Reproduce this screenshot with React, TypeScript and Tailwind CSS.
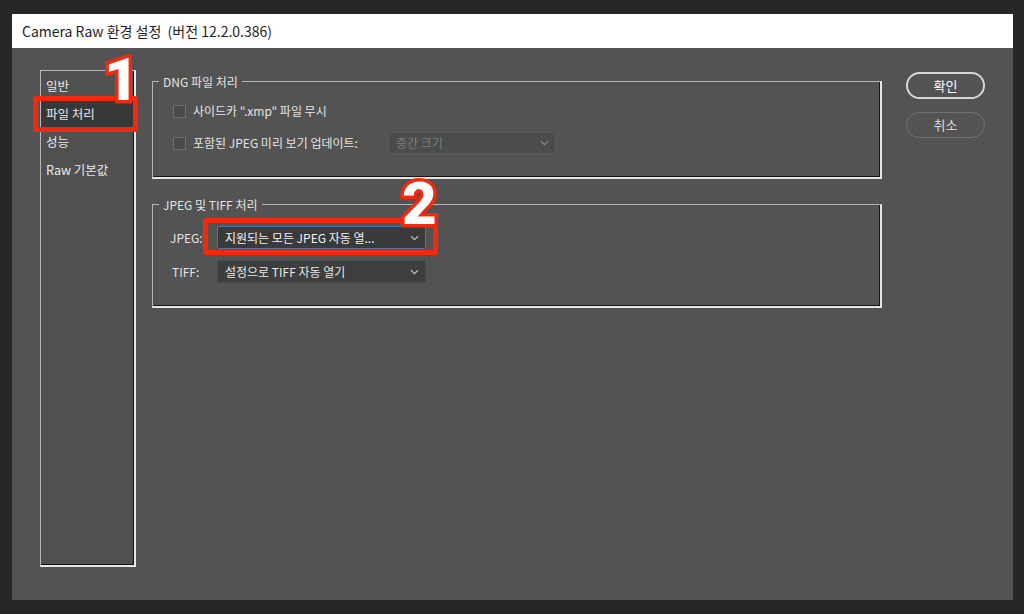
import React from "react";

const font = "font-['Noto_Sans_CJK_KR','Noto_Sans',sans-serif]";

function Chevron({ className }: { className?: string }) {
  return (
    <svg width="9" height="6" viewBox="0 0 9 6" className={className}>
      <path d="M1 1.2 4.5 4.6 8 1.2" fill="none" stroke="currentColor" strokeWidth="1.2" />
    </svg>
  );
}

function Select({ text, variant }: { text: string; variant: "focus" | "normal" | "disabled" }) {
  const styles = {
    focus: "bg-[#3a3a3a] border-[#4b78aa] text-[#f2f2f2]",
    normal: "bg-[#3e3e3e] border-[#494949] text-[#e8e8e8]",
    disabled: "bg-[#4c4c4c] border-[#575757] text-[#7d7d7d]",
  }[variant];
  return (
    <div className={`flex h-full items-center justify-between rounded-[2px] border pl-[7px] pr-[6px] ${styles}`}>
      <span className="text-[12px] leading-none">{text}</span>
      <Chevron className={variant === "disabled" ? "text-[#8a8a8a]" : "text-[#bdbdbd]"} />
    </div>
  );
}

function Checkbox() {
  return <div className="size-[13px] shrink-0 border border-[#6d6d6d] bg-[#4a4a4a]" />;
}

function Group({ title, children, className }: { title: string; children: React.ReactNode; className?: string }) {
  return (
    <fieldset
      className={`border border-t-[#b4b4b4] border-l-[#b4b4b4] border-r-2 border-b-2 border-r-[#e6e6e6] border-b-[#e6e6e6] shadow-[inset_-1px_-1px_0_#151515] ${className ?? ""}`}
    >
      <legend className="ml-[6px] px-[4px] text-[12px] leading-[17px] text-[#e4e4e4]">{title}</legend>
      {children}
    </fieldset>
  );
}

const sideItems = ["일반", "파일 처리", "성능", "Raw 기본값"];

export default function App() {
  return (
    <div className={`relative h-[614px] w-[1024px] overflow-hidden bg-[#272727] pl-[12px] pt-[14px] ${font}`}>
      <div className="flex h-[586px] w-[1001px] flex-col">
        {/* title bar */}
        <div className="flex h-[34px] items-center bg-white pl-[10px]">
          <span className="whitespace-pre text-[14px] text-[#1e1e1e]">Camera Raw 환경 설정  (버전 12.2.0.386)</span>
        </div>

        {/* body */}
        <div className="flex flex-1 bg-[#535353]">
          {/* sidebar */}
          <div className="ml-[28px] mt-[22px] h-[497px] w-[96px] border border-t-[#b8b8b8] border-l-[#b8b8b8] border-r-2 border-b-2 border-r-[#e8e8e8] border-b-[#e8e8e8] bg-[#505050] pt-[1px] shadow-[inset_-1px_-1px_0_#111]">
            {sideItems.map((item, i) => (
              <div
                key={item}
                className={`flex h-[28px] items-center pl-[5px] text-[12.5px] text-[#e8e8e8] ${i === 1 ? "mr-[1px] bg-[#383838]" : ""}`}
              >
                {item}
              </div>
            ))}
          </div>

          {/* main */}
          <div className="ml-[16px] mt-[25px] flex w-[730px] flex-col">
            <Group title="DNG 파일 처리">
              <div className="flex flex-col gap-[10px] pb-[23px] pl-[20px] pt-[10px]">
                <div className="flex h-[22px] items-center gap-[7px]">
                  <Checkbox />
                  <span className="text-[12px] text-[#e4e4e4]">사이드카 ".xmp" 파일 무시</span>
                </div>
                <div className="flex h-[22px] items-center gap-[7px]">
                  <Checkbox />
                  <span className="w-[188px] text-[12px] text-[#e4e4e4]">포함된 JPEG 미리 보기 업데이트:</span>
                  <div className="h-[22px] w-[168px]">
                    <Select text="중간 크기" variant="disabled" />
                  </div>
                </div>
              </div>
            </Group>

            <Group title="JPEG 및 TIFF 처리" className="mt-[17px]">
              <div className="flex flex-col gap-[11px] pb-[23px] pt-[13px]">
                <div className="flex h-[23px] items-center">
                  <span className="w-[64px] pl-[17px] text-[12px] text-[#e4e4e4]">JPEG:</span>
                  <div className="h-[23px] w-[209px]">
                    <Select text="지원되는 모든 JPEG 자동 열..." variant="focus" />
                  </div>
                </div>
                <div className="flex h-[23px] items-center">
                  <span className="w-[64px] pl-[19px] text-[12px] text-[#e4e4e4]">TIFF:</span>
                  <div className="h-[23px] w-[209px]">
                    <Select text="설정으로 TIFF 자동 열기" variant="normal" />
                  </div>
                </div>
              </div>
            </Group>
          </div>

          {/* buttons */}
          <div className="ml-[24px] mt-[24px] flex w-[79px] flex-col gap-[13px]">
            <button className="flex h-[27px] items-center justify-center rounded-full border-2 border-[#d6d6d6] text-[13px] text-white">
              확인
            </button>
            <button className="flex h-[26px] items-center justify-center rounded-full border border-[#727272] text-[13px] text-[#dcdcdc]">
              취소
            </button>
          </div>
        </div>
      </div>

      {/* annotations */}
      <div className="absolute left-[33px] top-[96px] h-[36px] w-[105px] rounded-[3px] border-[5px] border-[#f2290e]" />
      <span className="absolute left-[104px] top-[50px] font-['Roboto',sans-serif] text-[60px] font-black leading-none text-white [-webkit-text-stroke:7px_#f2290e] [paint-order:stroke_fill]">
        1
      </span>
      <div className="absolute left-[203px] top-[218px] h-[37px] w-[235px] rounded-[3px] border-[5px] border-[#f2290e]" />
      <span className="absolute left-[402px] top-[174px] font-['Roboto',sans-serif] text-[60px] font-black leading-none text-white [-webkit-text-stroke:7px_#f2290e] [paint-order:stroke_fill]">
        2
      </span>
    </div>
  );
}
